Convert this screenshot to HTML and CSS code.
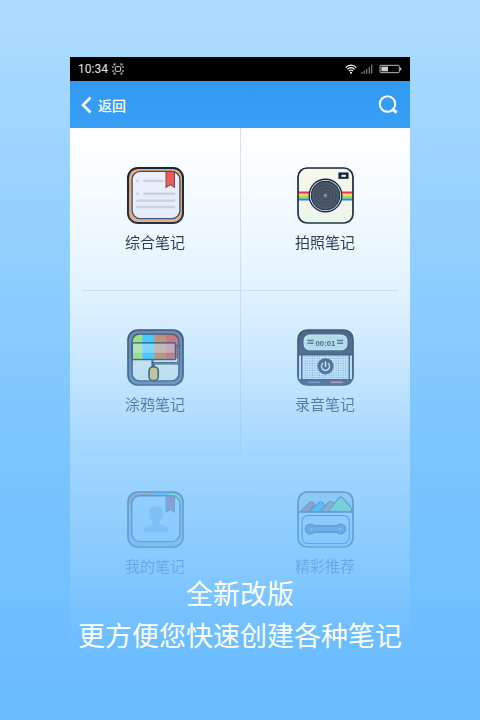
FILE: index.html
```html
<!DOCTYPE html>
<html lang="zh-CN">
<head>
<meta charset="utf-8">
<meta name="viewport" content="width=device-width, initial-scale=1">
<title>笔记</title>
<link rel="stylesheet" href="styles.css">
</head>
<body>
<main class="stage">
  <section class="phone">
    <div class="status">
      <span class="status-side">
        <span>10:34</span>
        <svg width="12" height="12" viewBox="0 0 36 36" fill="none" stroke="#ddd" stroke-width="3" aria-hidden="true">
          <path d="M11 3H5l4 5M25 3h6l-4 5M25 33h6l-4-5M11 33H5l4-5M3 9v6M33 9v6M3 21v6M33 21v6"/>
          <rect x="10" y="11" width="16" height="14" rx="3"/>
        </svg>
      </span>
      <span class="status-side">
        <svg width="12" height="10" viewBox="0 0 36 30" fill="none" stroke="#fff" stroke-width="3.4" aria-hidden="true">
          <path d="M2 11C11 1 25 1 34 11M7 16c6-7 16-7 22 0M12 21c4-4 8-4 12 0"/>
          <circle cx="18" cy="26" r="3" fill="#fff" stroke="none"/>
        </svg>
        <svg class="signal" width="12" height="10" viewBox="0 0 36 30" fill="#777" aria-hidden="true">
          <path d="M1 24h4v5H1zM8 20h4v9H8zM15 15h4v14h-4zM23 9h4v20h-4zM30 2h4v27h-4z"/>
        </svg>
        <svg width="23" height="10" viewBox="0 0 69 30" aria-hidden="true">
          <rect x="3" y="4" width="58" height="22" rx="3" fill="none" stroke="#bbb" stroke-width="3"/>
          <path d="M7 8h20v14H7z" fill="#ccc"/>
          <path d="M63 11h4v8h-4z" fill="#ccc"/>
        </svg>
      </span>
    </div>
    <header class="bar">
      <button class="back" type="button">
        <svg width="11" height="18" viewBox="0 0 11 18" fill="none" stroke="#fff" stroke-width="2.6" aria-hidden="true"><path d="M9.500 1.500L2 9l7.500 7.500"/></svg>
        <span>返回</span>
      </button>
      <button class="search" type="button" aria-label="搜索">
        <svg width="20" height="20" viewBox="0 0 20 20" fill="none" stroke="#fff" stroke-width="2" aria-hidden="true"><circle cx="9.500" cy="9" r="7.700"/><path d="M14 14l4.700 3.500" stroke-width="3"/></svg>
      </button>
    </header>
    <nav class="grid">
      <a class="cell" href="#all">
        <svg class="icon" viewBox="0 0 168 168" aria-hidden="true">
          <rect x="3" y="3" width="162" height="162" rx="29" fill="#f3ab66" stroke="#0c1833" stroke-width="6"/>
          <rect x="15" y="13" width="141" height="139" rx="24" fill="#f1f1fa" stroke="#35435e" stroke-width="4"/>
          <path d="M27 41h8M48 41h60M27 79h8M48 79h94M27 99h115M27 118h115" stroke="#cdd2d8" stroke-width="7"/>
          <path d="M115 13h25v47l-12-8-13 8z" fill="#f0524d" stroke="#713848" stroke-width="3"/>
        </svg>
        <span class="label">综合笔记</span>
      </a>
      <a class="cell" href="#photo">
        <svg class="icon" viewBox="0 0 168 168" aria-hidden="true">
          <rect x="3" y="3" width="162" height="162" rx="27" fill="#fcfbe8"/>
          <path d="M4 72h160v7H4z" fill="#f01d55"/>
          <path d="M4 79h160v7H4z" fill="#ffdc3c"/>
          <path d="M4 86h160v7H4z" fill="#8ed93f"/>
          <path d="M4 93h160v6H4z" fill="#1a80dd"/>
          <rect x="3" y="3" width="162" height="162" rx="27" fill="none" stroke="#0c1833" stroke-width="5"/>
          <circle cx="84" cy="84" r="48" fill="#f7fafc" stroke="#0c1833" stroke-width="4"/>
          <circle cx="84" cy="84" r="42" fill="#454857" stroke="#0c1833" stroke-width="3"/>
          <g fill="none" stroke="#2c3142" stroke-width="2"><circle cx="84" cy="84" r="31"/><circle cx="84" cy="84" r="22"/><circle cx="84" cy="84" r="13"/></g>
          <circle cx="84" cy="84" r="5" fill="#7d8694"/>
          <path d="M122 16h30v19h-30z" fill="#0c1833"/><path d="M131 23h13v6h-13z" fill="#fff"/>
        </svg>
        <span class="label">拍照笔记</span>
      </a>
      <a class="cell" href="#draw">
        <svg class="icon" viewBox="0 0 168 168" aria-hidden="true">
          <rect x="3" y="3" width="162" height="162" rx="29" fill="#5e6388" stroke="#101a30" stroke-width="5"/>
          <rect x="15" y="15" width="138" height="138" rx="22" fill="#f4f6e8"/>
          <path d="M15 88V34q2-17 22-19h8v73z" fill="#a5f035"/>
          <path d="M45 15h35v73H45z" fill="#20c8ff"/>
          <path d="M80 15h35v73H80z" fill="#e0722a"/>
          <path d="M115 15h29l7 14v59h-36z" fill="#f04438"/>
          <path d="M17 43h124v27H17z" fill="#fff" opacity=".42"/>
          <rect x="15" y="15" width="138" height="138" rx="22" fill="none" stroke="#101a30" stroke-width="4"/>
          <rect x="15" y="41" width="128" height="49" rx="3" fill="none" stroke="#101a30" stroke-width="4"/>
          <path d="M144 51h8v50H79v14" fill="none" stroke="#101a30" stroke-width="7"/>
          <path d="M144 51h8v50H79v14" fill="none" stroke="#8490b0" stroke-width="2"/>
          <path d="M75 92v22" stroke="#101a30" stroke-width="6"/>
          <rect x="65" y="112" width="27" height="40" rx="11" fill="#ffc03c" stroke="#101a30" stroke-width="5"/>
        </svg>
        <span class="label">涂鸦笔记</span>
      </a>
      <a class="cell" href="#audio">
        <svg class="icon" viewBox="0 0 168 168" aria-hidden="true">
          <defs><pattern id="dots" width="7" height="7" patternUnits="userSpaceOnUse"><rect width="7" height="7" fill="#f3f6f8"/><circle cx="3" cy="3" r="1.700" fill="#69758a"/></pattern></defs>
          <rect x="3" y="3" width="162" height="162" rx="27" fill="#2a2f42" stroke="#141b2e" stroke-width="5"/>
          <rect x="21" y="18" width="126" height="43" rx="16" fill="#cfe6dc" stroke="#f5fbfb" stroke-width="3"/>
          <path d="M31 34h18M31 42h18M118 34h18M118 42h18" stroke="#3c4f5c" stroke-width="4"/>
          <text x="84" y="51" class="digits" text-anchor="middle">00:01</text>
          <path d="M5 76h158v73H5z" fill="#f3f6f8"/>
          <path d="M17 78h134v69H17z" fill="url(#dots)"/>
          <path d="M4 76v73M164 76v73M5 76h158M14 78v70M154 78v70M5 149h158" fill="none" stroke="#141b2e" stroke-width="4"/>
          <circle cx="84" cy="110" r="24" fill="#2a2f42"/>
          <path d="M77 100a12 12 0 1 0 14 0M84 95v17" fill="none" stroke="#f6fbff" stroke-width="4"/>
          <path d="M32 157h36" stroke="#5e8294" stroke-width="4"/><path d="M98 157h36" stroke="#ff6070" stroke-width="5"/>
        </svg>
        <span class="label">录音笔记</span>
      </a>
      <a class="cell" href="#mine">
        <svg class="icon" viewBox="0 0 168 168" aria-hidden="true">
          <rect x="3" y="3" width="162" height="162" rx="29" fill="#c4ae88"/>
          <path d="M7 40Q9 7 35 7h48v9H35q-18 3-18 24z" fill="#f04030"/>
          <path d="M83 6h42v10H83z" fill="#00c8ff"/>
          <path d="M125 6h12q24 3 26 34h-9q-2-22-19-24h-10z" fill="#80ff40"/>
          <rect x="3" y="3" width="162" height="162" rx="29" fill="none" stroke="#101a30" stroke-width="5"/>
          <rect x="14" y="14" width="142" height="135" rx="24" fill="#e6f0ff" stroke="#101a30" stroke-width="4"/>
          <path d="M84 45c-16 0-21 11-19 26 1 9 5 14 10 19v8l-24 10v13h70v-13l-25-10v-8c5-5 9-10 10-19 2-15-4-26-22-26z" fill="#a5b9cc"/>
          <path d="M115 15h25v47l-12-7-13 7z" fill="#c83048" stroke="#34466d" stroke-width="3"/>
        </svg>
        <span class="label">我的笔记</span>
      </a>
      <a class="cell" href="#picks">
        <svg class="icon" viewBox="0 0 168 168" aria-hidden="true">
          <rect x="3" y="3" width="162" height="162" rx="27" fill="#cfdccf"/>
          <path d="M4 62h160v76q-3 25-26 27H30Q7 163 4 138z" fill="#e6f0ff"/>
          <g stroke="#101a30" stroke-width="3" stroke-linejoin="round">
            <path d="M10 61l27-27q5-5 10 0l6 7-20 20z" fill="#f03028"/>
            <path d="M38 61l27-27q6-5 12 2l5 6-18 19z" fill="#00b8ff"/>
            <path d="M70 61l23-28q6-6 12 0l10 28z" fill="#e06828"/>
            <path d="M96 61q-2-8 5-13l22-27q6-6 12 0l23 26q4 5 2 14z" fill="#70ff50"/>
          </g>
          <rect x="3" y="3" width="162" height="162" rx="27" fill="none" stroke="#101a30" stroke-width="5"/>
          <path d="M4 62h160" stroke="#101a30" stroke-width="4"/>
          <rect x="15" y="72" width="139" height="83" rx="17" fill="none" stroke="#101a30" stroke-width="3"/>
          <path d="M50 103h68a14 14 0 1 1 0 18H50a14 14 0 1 1 0-18z" fill="#58627a" stroke="#101a30" stroke-width="5"/>
          <circle cx="42" cy="112" r="6" fill="#a4b9c9" stroke="#101a30" stroke-width="2"/><circle cx="126" cy="112" r="6" fill="#a4b9c9" stroke="#101a30" stroke-width="2"/>
        </svg>
        <span class="label">精彩推荐</span>
      </a>
    </nav>
  </section>
  <h1 class="caption">全新改版<br>更方便您快速创建各种笔记</h1>
</main>
</body>
</html>
```
FILE: styles.css
```css
* { box-sizing: border-box; }

body {
  margin: 0;
  font-family: Roboto, "Noto Sans CJK SC", sans-serif;
}

.stage {
  position: relative;
  min-height: 100vh;
  padding: 57px 70px 64px;
  background: linear-gradient(#aedcff, #7bc5ff 62%, #68bbff);
}

.status {
  display: flex;
  align-items: center;
  justify-content: space-between;
  height: 24px;
  padding: 0 8px;
  background: #000;
  color: #e6e6e6;
  font-size: 12px;
  line-height: 24px;
}

.status-side {
  display: flex;
  align-items: center;
  gap: 4px;
}

.signal { margin-right: 2px; }

.bar {
  display: flex;
  align-items: center;
  justify-content: space-between;
  height: 47px;
  padding: 0 12px 0 11px;
  background: linear-gradient(#3399f1, #379ff5);
}

.bar button {
  display: flex;
  align-items: center;
  gap: 6px;
  padding: 0;
  border: 0;
  background: none;
  color: #fff;
  font: 500 14px/20px "Noto Sans CJK SC", sans-serif;
  cursor: pointer;
}

.grid {
  position: relative;
  display: grid;
  grid-template-columns: 1fr 1fr;
  grid-auto-rows: 162px;
  height: 528px;
  margin-bottom: -64px;
  background: #fff;
  mask-image: linear-gradient(
    #000,
    rgb(0 0 0 / .75) 162px,
    rgb(0 0 0 / .43) 277px,
    rgb(0 0 0 / .3) 324px,
    rgb(0 0 0 / .14) 439px,
    transparent 512px
  );
}

/* Hairlines between the first four cells */
.grid::before,
.grid::after {
  content: "";
  position: absolute;
  background: #dbe4ec;
}

.grid::before {
  top: 0;
  left: 50%;
  width: 1px;
  height: 324px;
}

.grid::after {
  top: 162px;
  left: 12px;
  right: 12px;
  height: 1px;
}

.cell {
  display: flex;
  flex-direction: column;
  align-items: center;
  gap: 9px;
  padding-top: 39px;
  color: #161c2a;
  text-decoration: none;
}

.icon {
  width: 57px;
  height: 57px;
}

.label {
  font-size: 15px;
  line-height: 20px;
}

.digits {
  font: 700 23px "Liberation Sans Narrow", "Liberation Sans", sans-serif;
  fill: #2a2f42;
}

.caption {
  position: absolute;
  left: 0;
  right: 0;
  bottom: 62px;
  margin: 0;
  color: #fff;
  font-size: 27px;
  font-weight: 400;
  line-height: 42px;
  text-align: center;
}
```
